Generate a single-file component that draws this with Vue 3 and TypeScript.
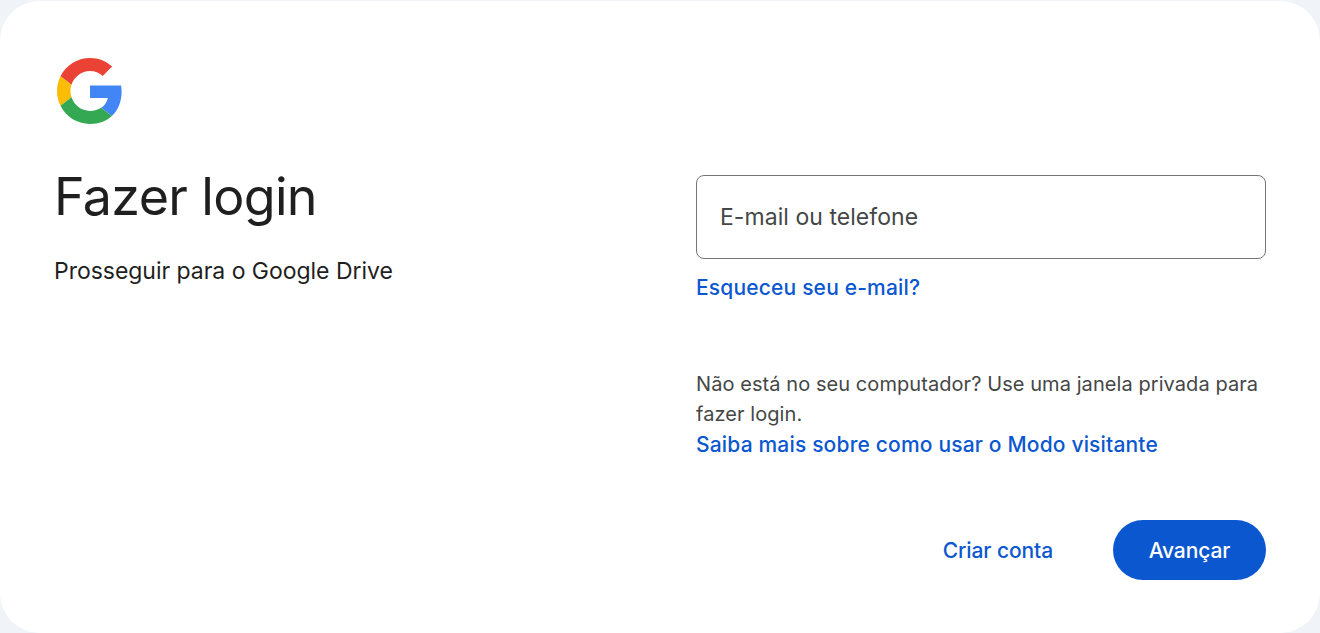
<script setup lang="ts">
const logoPaths = [
  { fill: '#EA4335', d: 'M24 9.5c3.54 0 6.71 1.22 9.21 3.6l6.85-6.85C35.9 2.38 30.47 0 24 0 14.62 0 6.51 5.38 2.56 13.22l7.98 6.19C12.43 13.72 17.74 9.5 24 9.5z' },
  { fill: '#4285F4', d: 'M46.98 24.55c0-1.57-.15-3.09-.38-4.55H24v9.02h12.94c-.58 2.96-2.26 5.48-4.78 7.18l7.73 6c4.51-4.18 7.09-10.36 7.09-17.65z' },
  { fill: '#FBBC05', d: 'M10.53 28.59c-.48-1.45-.76-2.99-.76-4.59s.27-3.14.76-4.59l-7.98-6.19C.92 16.46 0 20.12 0 24c0 3.88.92 7.54 2.56 10.78l7.97-6.19z' },
  { fill: '#34A853', d: 'M24 48c6.48 0 11.93-2.13 15.89-5.81l-7.73-6c-2.15 1.45-4.92 2.3-8.16 2.3-6.26 0-11.57-4.22-13.47-9.91l-7.98 6.19C6.51 42.62 14.62 48 24 48z' },
]
</script>

<template>
  <main class="page">
    <section class="card">
      <div class="intro">
        <svg class="logo" viewBox="0 0 48 48" aria-label="Google">
          <path v-for="p in logoPaths" :key="p.fill" :fill="p.fill" :d="p.d" />
        </svg>
        <h1 class="title">Fazer login</h1>
        <p class="subtitle">Prosseguir para o Google Drive</p>
      </div>
      <form class="form" @submit.prevent>
        <label class="field">
          <input class="input" type="text" placeholder="E-mail ou telefone" />
        </label>
        <a class="link forgot" href="#">Esqueceu seu e-mail?</a>
        <p class="guest">Não está no seu computador? Use uma janela privada para fazer login.</p>
        <a class="link guest-link" href="#">Saiba mais sobre como usar o Modo visitante</a>
        <div class="actions">
          <button class="btn-text" type="button">Criar conta</button>
          <button class="btn-primary" type="submit">Avançar</button>
        </div>
      </form>
    </section>
  </main>
</template>

<style>
html,
body {
  margin: 0;
  background: #f0f4f9;
}
</style>

<style scoped>
.page {
  height: 633px;
  padding-top: 1px;
  box-sizing: border-box;
  overflow: hidden;
  font-family: Inter, Roboto, "Liberation Sans", sans-serif;
}

.card {
  height: 632px;
  box-sizing: border-box;
  padding: 57px 54px 0;
  display: grid;
  grid-template-columns: 642px 570px;
  background: #fff;
  border-radius: 40px;
}

.logo {
  display: block;
  width: 66px;
  height: 66px;
  margin-left: 3px;
}

.title {
  margin: 40px 0 0;
  font-size: 52px;
  line-height: 66px;
  font-weight: 400;
  letter-spacing: -0.65px;
  color: #1f1f1f;
}

.subtitle {
  margin: 25px 0 0;
  font-size: 23px;
  line-height: 32px;
  letter-spacing: -0.03px;
  color: #1f1f1f;
}

.form {
  display: flex;
  flex-direction: column;
  align-items: flex-start;
  padding-top: 117px;
}

.field {
  width: 100%;
}

.input {
  display: block;
  width: 100%;
  height: 84px;
  box-sizing: border-box;
  padding: 0 23px;
  border: 1px solid #747775;
  border-radius: 8px;
  outline: none;
  font: inherit;
  font-size: 23px;
  letter-spacing: 0.05px;
  color: #1f1f1f;
}

.input::placeholder {
  color: #444746;
  opacity: 1;
}

.link {
  color: #0b57d0;
  font-size: 21px;
  font-weight: 500;
  line-height: 30px;
  letter-spacing: 0.17px;
  text-decoration: none;
}

.forgot {
  margin-top: 14px;
}

.guest {
  margin: 66px 0 0;
  font-size: 20px;
  line-height: 30px;
  letter-spacing: 0.07px;
  color: #444746;
}

.guest-link {
  margin-top: 1px;
}

.actions {
  align-self: stretch;
  display: flex;
  justify-content: flex-end;
  align-items: center;
  gap: 60px;
  margin-top: 60px;
}

.btn-text,
.btn-primary {
  border: none;
  font: inherit;
  font-size: 21px;
  font-weight: 500;
  letter-spacing: -0.1px;
  cursor: pointer;
}

.btn-text {
  padding: 0;
  background: none;
  color: #0b57d0;
}

.btn-primary {
  width: 153px;
  height: 60px;
  border-radius: 30px;
  background: #0b57d0;
  color: #fff;
}
</style>
